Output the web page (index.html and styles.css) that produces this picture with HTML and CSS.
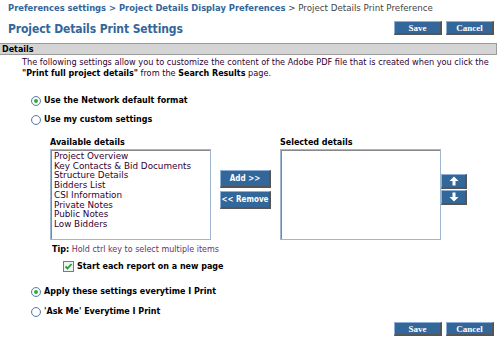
FILE: index.html
```html
<!DOCTYPE html>
<html>
<head>
<meta charset="utf-8">
<title>Project Details Print Settings</title>
<link rel="stylesheet" href="styles.css">
</head>
<body>
<div class="crumbs"><b>Preferences settings &gt; Project Details Display Preferences</b> &gt; Project Details Print Preference</div>
<div class="titlerow">
  <h1>Project Details Print Settings</h1>
  <div class="btns"><span class="btn">Save</span><span class="btn">Cancel</span></div>
</div>
<div class="bar">Details</div>
<p class="intro">The following settings allow you to customize the content of the Adobe PDF file that is created when you click the<br><b>"Print full project details"</b> from the <b>Search Results</b> page.</p>

<div class="opt first"><span class="radio on"></span>Use the Network default format</div>
<div class="opt"><span class="radio"></span>Use my custom settings</div>

<div class="picker">
  <div class="col">
    <div class="lbl">Available details</div>
    <div class="list">
      <div>Project Overview</div>
      <div>Key Contacts &amp; Bid Documents</div>
      <div>Structure Details</div>
      <div>Bidders List</div>
      <div>CSI Information</div>
      <div>Private Notes</div>
      <div>Public Notes</div>
      <div>Low Bidders</div>
    </div>
  </div>
  <div class="mid">
    <span class="btn wide">Add &gt;&gt;</span>
    <span class="btn wide">&lt;&lt; Remove</span>
  </div>
  <div class="col">
    <div class="lbl">Selected details</div>
    <div class="list"></div>
  </div>
  <div class="arrows">
    <span class="btn arr"><svg width="10" height="10" viewBox="0 0 10 10"><path d="M5 0.5 L9.5 5 L6.5 5 L6.5 9.5 L3.5 9.5 L3.5 5 L0.5 5 Z" fill="#fff"/></svg></span>
    <span class="btn arr"><svg width="10" height="10" viewBox="0 0 10 10"><path d="M5 9.5 L9.5 5 L6.5 5 L6.5 0.5 L3.5 0.5 L3.5 5 L0.5 5 Z" fill="#fff"/></svg></span>
  </div>
</div>

<div class="tip"><b>Tip:</b> Hold ctrl key to select multiple items</div>
<div class="check"><span class="box"><svg width="9" height="9" viewBox="0 0 9 9"><path d="M1.5 4.5 L3.5 6.5 L7.5 2" stroke="#21a121" stroke-width="1.8" fill="none"/></svg></span>Start each report on a new page</div>

<div class="opt apply"><span class="radio on"></span>Apply these settings everytime I Print</div>
<div class="opt ask"><span class="radio"></span>'Ask Me' Everytime I Print</div>

<div class="foot"><div class="btns"><span class="btn">Save</span><span class="btn">Cancel</span></div></div>
</body>
</html>
```

FILE: styles.css
```css
body {
  margin: 0;
  background: #ffffff;
  font-family: "DejaVu Sans", Verdana, sans-serif;
  font-size: 8.8px;
  color: #330033;
}
.crumbs {
  padding: 3px 0 0 8px;
  height: 10px;
  line-height: 10px;
  font-size: 8.7px;
  color: #444444;
}
.crumbs b {
  color: #336699;
  font-size: 8.4px;
}
.titlerow {
  display: flex;
  align-items: center;
  justify-content: space-between;
  height: 30px;
}
h1 {
  margin: 2px 0 0 8px;
  font-family: "DejaVu Sans Condensed", "DejaVu Sans", sans-serif;
  font-size: 12px;
  letter-spacing: -0.1px;
  font-weight: bold;
  color: #336699;
}
.btns {
  display: flex;
  gap: 4px;
  margin-right: 5px;
}
.btn {
  display: inline-flex;
  align-items: center;
  justify-content: center;
  box-sizing: border-box;
  width: 48px;
  height: 14px;
  background: #336699;
  color: #ffffff;
  font-family: "Liberation Serif", serif;
  font-weight: bold;
  font-size: 9px;
  white-space: nowrap;
  border-top: 1px solid #8fb0d6;
  border-left: 1px solid #8fb0d6;
  border-right: 2px solid #555555;
  border-bottom: 2px solid #555555;
}
.bar {
  margin-right: 2px;
  height: 12px;
  line-height: 11px;
  box-sizing: border-box;
  background: #d4d4d4;
  border: 1px solid #9a9a9a;
  border-left: 0;
  padding-left: 2px;
  font-weight: bold;
  font-size: 8px;
  color: #000000;
}
.intro {
  margin: 2px 0 0 22px;
  line-height: 11px;
  font-size: 8.2px;
  white-space: nowrap;
}
.intro b {
  color: #000000;
  font-size: 8px;
}
.opt {
  display: flex;
  align-items: center;
  height: 19px;
  padding-left: 31px;
  font-weight: bold;
  color: #000000;
  font-size: 8px;
}
.opt.first {
  margin-top: 12px;
}
.opt.apply {
  margin-top: 10px;
}
.opt.ask {
  margin-top: 1px;
}
.radio {
  box-sizing: border-box;
  width: 10px;
  height: 10px;
  border-radius: 50%;
  border: 1px solid #5a7fa8;
  background: radial-gradient(circle, #ffffff 40%, #dfe6ee 100%);
  margin-right: 3px;
  display: flex;
  align-items: center;
  justify-content: center;
}
.radio.on::after {
  content: "";
  width: 4px;
  height: 4px;
  border-radius: 50%;
  background: #2fae2f;
}
.picker {
  display: flex;
  margin: 9px 0 0 50px;
}
.lbl {
  font-weight: bold;
  font-size: 8px;
  color: #000000;
  height: 10px;
  line-height: 10px;
  margin-bottom: 1px;
}
.list {
  box-sizing: border-box;
  width: 161px;
  height: 91px;
  border: 1px solid #9fb6d0;
  box-shadow: inset 1px 1px 0 #888888;
  padding: 2px 0 0 3px;
  line-height: 9.7px;
}
.mid {
  display: flex;
  flex-direction: column;
  gap: 3px;
  margin: 32px 9px 0 9px;
}
.btn.wide {
  width: 51px;
  height: 18px;
  font-family: "DejaVu Sans Condensed", "DejaVu Sans", sans-serif;
  font-size: 8px;
}
.arrows {
  display: flex;
  flex-direction: column;
  gap: 1px;
  margin-top: 36px;
}
.btn.arr {
  width: 26px;
  height: 15px;
}
.tip {
  margin: 5px 0 0 52px;
  font-size: 8px;
  color: #663366;
}
.tip b {
  color: #000000;
}
.check {
  display: flex;
  align-items: center;
  margin: 7px 0 0 63px;
  font-weight: bold;
  color: #000000;
  font-size: 8px;
}
.box {
  box-sizing: border-box;
  width: 11px;
  height: 11px;
  border: 1px solid #5a7fa8;
  background: #eef2f6;
  margin-right: 3px;
  display: flex;
  align-items: center;
  justify-content: center;
}
.foot {
  display: flex;
  justify-content: flex-end;
  margin-top: 1px;
}
```
